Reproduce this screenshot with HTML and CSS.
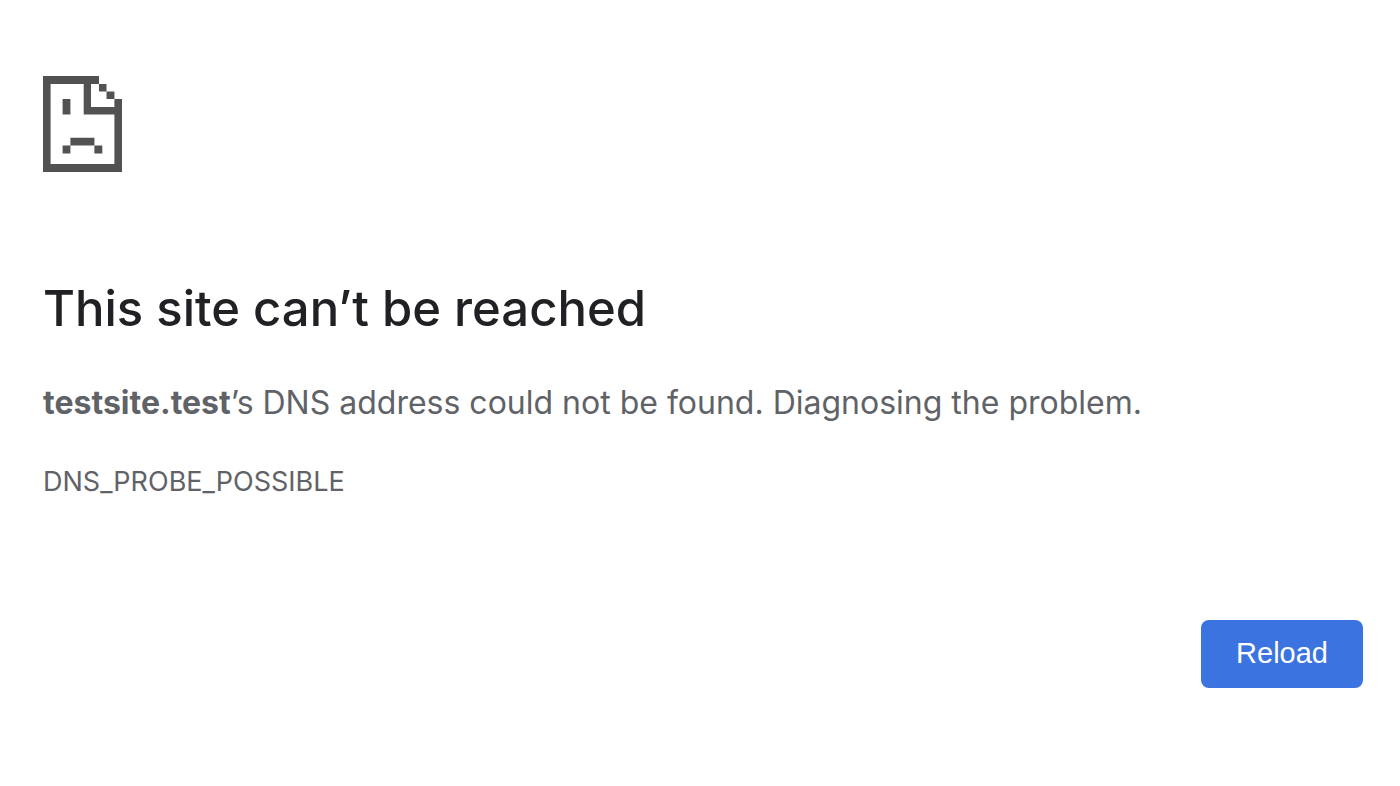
FILE: index.html
```html
<!DOCTYPE html>
<html lang="en">
<head>
    <meta charset="utf-8">
    <meta name="viewport" content="width=device-width, initial-scale=1">
    <title>testsite.test</title>
    <link rel="stylesheet" href="styles.css">
</head>
<body>
    <main class="error-page">
        <svg class="error-icon" viewBox="0 0 79 96" aria-hidden="true">
            <!-- page outline with folded corner -->
            <path d="M0 0H56V8H48V31H71.400V23H79V96H0ZM7.600 8V88H71.400V38.600H40.700V8Z" fill-rule="evenodd"/>
            <path d="M56 8H63.500V15.500H56ZM63.500 15.500H71.400V23H63.500Z"/>
            <!-- face -->
            <path d="M19.600 23H27.400V38.600H19.600ZM27.400 61.700H51.400V69.600H27.400ZM19.600 69.600H27.400V77.500H19.600ZM51.400 69.600H59.300V77.500H51.400Z"/>
        </svg>
        <h1>This site can’t be reached</h1>
        <p class="summary"><strong>testsite.test</strong>’s DNS address could not be found. Diagnosing the problem.</p>
        <p class="error-code">DNS_PROBE_POSSIBLE</p>
        <div class="buttons">
            <button type="button" class="reload" onclick="location.reload()">Reload</button>
        </div>
    </main>
</body>
</html>
```

FILE: styles.css
```css
body {
    margin: 0;
    background-color: #fff;
    color: #5f6368;
    font-family: Inter, "Liberation Sans", sans-serif;
}
.error-page {
    padding: 76px 37px 40px 43px;
}
.error-icon {
    display: block;
    width: 79px;
    height: 96px;
    fill: #525252;
}
h1 {
    margin: 105px 0 0;
    color: #202124;
    font-size: 49px;
    font-weight: 500;
    line-height: 64px;
}
.summary {
    margin: 36px 0 0;
    font-size: 32px;
    line-height: 52px;
}
.error-code {
    margin: 35px 0 0;
    font-size: 27px;
    line-height: 36px;
}
.buttons {
    display: flex;
    justify-content: flex-end;
    margin-top: 120px;
}
.reload {
    padding: 15px 35px 17px;
    border: none;
    border-radius: 8px;
    background-color: #3b74e0;
    color: #fff;
    font-family: "Liberation Sans", Arial, sans-serif;
    font-size: 29px;
    line-height: 36px;
    cursor: pointer;
}
.reload:hover {
    background-color: #3367d6;
}
```
